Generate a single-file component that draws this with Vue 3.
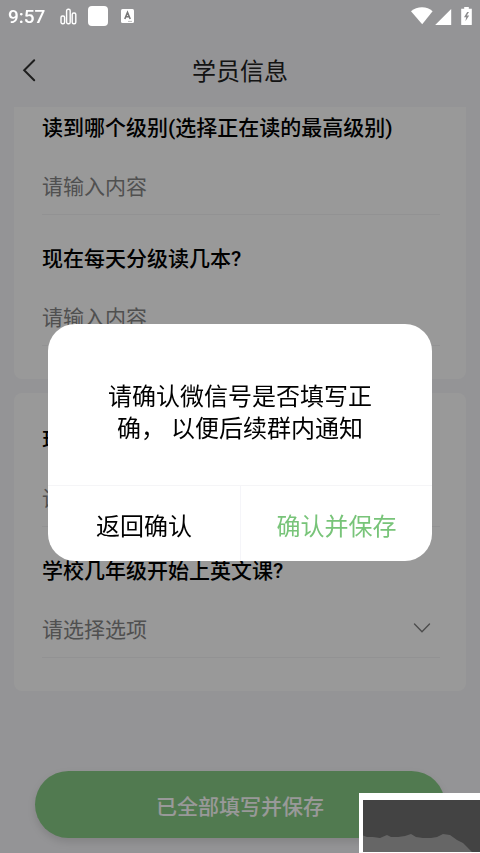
<script setup>
import { ref } from 'vue'

const cards = ref([
  [
    { id: 'level', label: '读到哪个级别(选择正在读的最高级别)', type: 'text', value: '' },
    { id: 'daily', label: '现在每天分级读几本?', type: 'text', value: '' },
  ],
  [
    { id: 'grade', label: '现在几年级?', type: 'text', value: '' },
    { id: 'start', label: '学校几年级开始上英文课?', type: 'select', value: '' },
  ],
])
const grades = ['一年级', '二年级', '三年级']
</script>

<template>
  <div class="page">
    <header class="header">
      <button class="back" type="button" aria-label="返回">
        <svg width="14" height="24" viewBox="0 0 14 24"><path d="M12.2 2.2 2.2 12.2 12.2 22.2" /></svg>
      </button>
      <h1 class="title">学员信息</h1>
    </header>

    <main class="form">
      <section v-for="(fields, i) in cards" :key="i" class="card">
        <div v-for="field in fields" :key="field.id" class="field">
          <label class="label" :for="field.id">{{ field.label }}</label>
          <input
            v-if="field.type === 'text'"
            :id="field.id"
            v-model="field.value"
            class="control"
            type="text"
            placeholder="请输入内容"
          />
          <div v-else class="select-row">
            <select :id="field.id" v-model="field.value" class="control">
              <option value="">请选择选项</option>
              <option v-for="grade in grades" :key="grade">{{ grade }}</option>
            </select>
            <svg class="arrow" width="18" height="14" viewBox="0 0 18 14"><path d="M1.5 1 9 8.8 16.5 1" /></svg>
          </div>
        </div>
      </section>
    </main>

    <footer class="footer">
      <button class="submit" type="button">已全部填写并保存</button>
    </footer>
  </div>

  <div class="overlay">
    <div class="dialog" role="dialog" aria-modal="true" aria-labelledby="dialog-text">
      <p id="dialog-text" class="message">请确认微信号是否填写正确， 以便后续群内通知</p>
      <div class="actions">
        <button class="action" type="button">返回确认</button>
        <button class="action confirm" type="button">确认并保存</button>
      </div>
    </div>
  </div>

  <div class="status">
    <time class="clock">9:57</time>
    <svg class="bars" width="17" height="17" viewBox="0 0 17 17">
      <rect x="1" y="8" width="3.6" height="7.8" rx="1.5" />
      <rect x="6.6" y="1.2" width="3.6" height="14.6" rx="1.5" />
      <rect x="12.2" y="5" width="3.6" height="10.8" rx="1.5" />
    </svg>
    <span class="square"></span>
    <svg class="letter" width="13" height="14" viewBox="0 0 13 14">
      <rect width="13" height="14" rx="1.5" fill="#fff" />
      <path d="M3.8 10 6.5 3.4 9.2 10M4.8 7.8h3.4" fill="none" stroke="#777" stroke-width="1.6" />
      <path d="M7 12.4h4" stroke="#bbb" stroke-width="1" />
    </svg>
    <svg class="signals" width="62" height="20" viewBox="0 0 62 20" fill="#fff">
      <path d="M0 5.2C6-.2 16.2-.2 21.6 5.2L11.2 18.2Z" />
      <path d="M40.2 3V19H24.2Z" />
      <path d="M53.2 1h4.6v1.8h3V18.4q0 .6-.6.6h-9.4q-.6 0-.6-.6V2.8h3Z" />
      <path d="M56.2 6 53 11.2h2.2l-.8 4 3.8-5.6h-2.4L58 6Z" fill="#8c8c8e" />
    </svg>
  </div>

  <div class="preview">
    <svg viewBox="0 0 117 52" preserveAspectRatio="none">
      <path d="M0 35.5 4 37H10L17 38 24 35 28 37H35L42 36 48 34 53 37 60 38 68 38 74 37 80 34 87 35 94 40 100 43 104 47 109 52H0Z" fill="#666" />
    </svg>
  </div>
</template>

<style>
body {
  margin: 0;
  background: #f7f7fa;
}
</style>

<style scoped>
.page,
.overlay,
.status {
  font-family: Roboto, "Noto Sans CJK SC", sans-serif;
}

.page {
  display: flex;
  flex-direction: column;
  min-height: 100vh;
  box-sizing: border-box;
  padding-top: 32px;
  overflow: hidden;
  background: #f7f7fa;
}

button,
input,
select {
  margin: 0;
  padding: 0;
  border: 0;
  background: none;
  font-family: inherit;
}

.header {
  display: grid;
  grid-template-columns: 48px 1fr 48px;
  align-items: center;
  height: 75px;
}

.back {
  display: flex;
  padding-left: 22px;
}

.back svg,
.arrow {
  fill: none;
  stroke: #333;
  stroke-width: 2;
  stroke-linecap: round;
}

.title {
  margin: 0;
  padding-top: 4px;
  color: #222;
  font-size: 24px;
  font-weight: 400;
  line-height: 32px;
  text-align: center;
}

.form {
  display: flex;
  flex-direction: column;
  gap: 14px;
  padding: 0 14px;
  overflow: hidden;
}

.card {
  padding: 3px 26px 33px 28px;
  border-radius: 8px;
  background: #fff;
}

.card:first-child {
  margin-top: -26px;
}

.field {
  display: flex;
  flex-direction: column;
  gap: 27px;
  padding: 28px 0 11px;
  border-bottom: 1px solid #f3f3f6;
}

.label {
  color: #000;
  font-size: 21px;
  font-weight: 500;
  line-height: 32px;
  white-space: nowrap;
}

.control {
  width: 100%;
  height: 32px;
  color: #868686;
  font-size: 21px;
  line-height: 32px;
  appearance: none;
  outline: none;
}

.control::placeholder {
  color: #868686;
  opacity: 1;
}

.select-row {
  display: flex;
  align-items: center;
}

.arrow {
  flex: none;
  margin-right: 9px;
  stroke: #808080;
  stroke-width: 1.4;
}

.footer {
  padding: 80px 35px 15px;
}

.submit {
  width: 100%;
  height: 67px;
  border-radius: 34px;
  background: #87cb85;
  box-shadow: 0 4px 8px rgba(0, 0, 0, 0.12);
  color: #fff;
  font-size: 21px;
  font-weight: 500;
}

.overlay {
  position: fixed;
  inset: 0;
  display: flex;
  align-items: center;
  justify-content: center;
  padding-top: 32px;
  background: rgba(0, 0, 0, 0.4);
}

.dialog {
  width: 80%;
  border-radius: 27px;
  overflow: hidden;
  background: #fff;
}

.message {
  margin: 0;
  padding: 57px 56px 40px;
  color: #000;
  font-size: 24px;
  line-height: 32px;
  text-align: center;
}

.actions {
  display: grid;
  grid-template-columns: 1fr 1fr;
  border-top: 1px solid #f5f5f7;
}

.action {
  height: 75px;
  padding-top: 1px;
  color: #000;
  font-size: 24px;
}

.confirm {
  border-left: 1px solid #f5f5f9;
  color: #78c479;
}

.status {
  position: fixed;
  inset: 0 0 auto;
  display: flex;
  align-items: center;
  height: 32px;
  padding: 0 7px 0 8px;
  color: #fff;
}

.clock {
  font-size: 19px;
  font-weight: 500;
}

.bars {
  margin-left: 15px;
  fill: none;
  stroke: #fff;
  stroke-width: 1.4;
}

.square {
  width: 20px;
  height: 20px;
  margin-left: 11px;
  border-radius: 4px;
  background: #fff;
}

.letter {
  margin-left: 13px;
}

.signals {
  margin-left: auto;
}

.preview {
  position: fixed;
  right: 0;
  bottom: 0;
  width: 117px;
  height: 52px;
  border: solid #fff;
  border-width: 7px 0 1px 4px;
  background: #434343;
}

.preview svg {
  display: block;
  width: 100%;
  height: 100%;
}
</style>
